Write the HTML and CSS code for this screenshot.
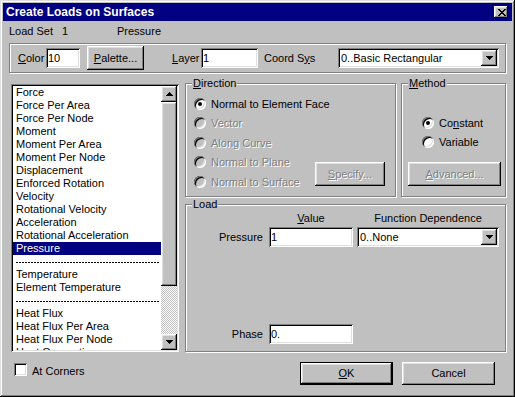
FILE: index.html
```html
<!DOCTYPE html>
<html>
<head>
<meta charset="utf-8">
<title>Create Loads on Surfaces</title>
<link rel="stylesheet" href="styles.css">
</head>
<body>
<div class="window">
  <div class="titlebar">
    <span class="title">Create Loads on Surfaces</span>
    <div class="close">
      <svg width="8" height="7" viewBox="0 0 8 7" shape-rendering="crispEdges"><path fill="#000" d="M0 0h2v1H0zM6 0h2v1H6zM1 1h2v1H1zM5 1h2v1H5zM2 2h4v1H2zM3 3h2v1H3zM2 4h4v1H2zM1 5h2v1H1zM5 5h2v1H5zM0 6h2v1H0zM6 6h2v1H6z"/></svg>
    </div>
  </div>

  <div class="info"><span class="ls">Load Set</span><span class="ls-num">1</span><span>Pressure</span></div>

  <div class="frame">
    <span class="lbl lbl-color"><u>C</u>olor</span>
    <div class="field w-color">10</div>
    <div class="btn btn-palette"><span><u>P</u>alette...</span></div>
    <span class="lbl lbl-layer"><u>L</u>ayer</span>
    <div class="field w-layer">1</div>
    <span class="lbl lbl-coord">Coord S<u>y</u>s</span>
    <div class="combo w-coord">
      <span class="combo-text">0..Basic Rectangular</span>
      <div class="drop"><svg width="7" height="4" viewBox="0 0 7 4" shape-rendering="crispEdges"><path fill="#000" d="M0 0h7v1H0zM1 1h5v1H1zM2 2h3v1H2zM3 3h1v1H3z"/></svg></div>
    </div>
  </div>

  <div class="main">
    <div class="listbox">
      <div class="items">
        <div class="item">Force</div>
        <div class="item">Force Per Area</div>
        <div class="item">Force Per Node</div>
        <div class="item">Moment</div>
        <div class="item">Moment Per Area</div>
        <div class="item">Moment Per Node</div>
        <div class="item">Displacement</div>
        <div class="item">Enforced Rotation</div>
        <div class="item">Velocity</div>
        <div class="item">Rotational Velocity</div>
        <div class="item">Acceleration</div>
        <div class="item">Rotational Acceleration</div>
        <div class="item selected">Pressure</div>
        <div class="sep"></div>
        <div class="item">Temperature</div>
        <div class="item">Element Temperature</div>
        <div class="sep"></div>
        <div class="item">Heat Flux</div>
        <div class="item">Heat Flux Per Area</div>
        <div class="item">Heat Flux Per Node</div>
        <div class="item">Heat Generation</div>
      </div>
      <div class="vscroll">
        <div class="sb-btn"><svg width="7" height="4" viewBox="0 0 7 4" shape-rendering="crispEdges"><path fill="#000" d="M3 0h1v1H3zM2 1h3v1H2zM1 2h5v1H1zM0 3h7v1H0z"/></svg></div>
        <div class="thumb"></div>
        <div class="track"></div>
        <div class="sb-btn"><svg width="7" height="4" viewBox="0 0 7 4" shape-rendering="crispEdges"><path fill="#000" d="M0 0h7v1H0zM1 1h5v1H1zM2 2h3v1H2zM3 3h1v1H3z"/></svg></div>
      </div>
    </div>

    <div class="right">
      <div class="top">
        <div class="group dir">
          <span class="legend"><u>D</u>irection</span>
          <div class="radios">
            <div class="rrow"><span class="radio checked"></span><span>Normal to Element Face</span></div>
            <div class="rrow disabled"><span class="radio"></span><span>Vector</span></div>
            <div class="rrow disabled"><span class="radio"></span><span>Along Curve</span></div>
            <div class="rrow disabled"><span class="radio"></span><span>Normal to Plane</span></div>
            <div class="rrow disabled"><span class="radio"></span><span>Normal to Surface</span></div>
          </div>
          <div class="btn btn-specify disabled"><span><u>S</u>pecify...</span></div>
        </div>
        <div class="group method">
          <span class="legend"><u>M</u>ethod</span>
          <div class="radios">
            <div class="rrow"><span class="radio checked"></span><span>Co<u>n</u>stant</span></div>
            <div class="rrow"><span class="radio"></span><span>Variable</span></div>
          </div>
          <div class="btn btn-adv disabled"><span><u>A</u>dvanced...</span></div>
        </div>
      </div>

      <div class="group load">
        <span class="legend">Load</span>
        <span class="hdr hdr-value"><u>V</u>alue</span>
        <span class="hdr hdr-func">Function Dependence</span>
        <span class="rlabel row-p">Pressure</span>
        <div class="field val row-p">1</div>
        <div class="combo w-func row-p">
          <span class="combo-text">0..None</span>
          <div class="drop"><svg width="7" height="4" viewBox="0 0 7 4" shape-rendering="crispEdges"><path fill="#000" d="M0 0h7v1H0zM1 1h5v1H1zM2 2h3v1H2zM3 3h1v1H3z"/></svg></div>
        </div>
        <span class="rlabel row-ph">Phase</span>
        <div class="field val row-ph">0.</div>
      </div>
    </div>
  </div>

  <div class="bottom">
    <div class="check-wrap">
      <span class="checkbox"></span>
      <span class="check-label">At Corners</span>
    </div>
    <div class="btn btn-ok"><span><u>O</u>K</span></div>
    <div class="btn btn-cancel"><span>Cancel</span></div>
  </div>
</div>
</body>
</html>
```

FILE: styles.css
```css
* { box-sizing: border-box; }
html, body { margin: 0; padding: 0; }
body {
  width: 515px;
  height: 397px;
  overflow: hidden;
  background: #c0c0c0;
  font-family: "Liberation Sans", Arial, sans-serif;
  font-size: 11px;
  color: #000;
}
u { text-decoration: underline; text-underline-offset: 1px; }

.window {
  width: 515px;
  height: 397px;
  padding: 3px;
  background: #c0c0c0;
  box-shadow: inset -1px -1px #000, inset 1px 1px #dfdfdf, inset -2px -2px #808080, inset 2px 2px #fff;
  display: flex;
  flex-direction: column;
}

/* raised / sunken helpers */
.btn, .close, .drop, .sb-btn, .thumb {
  background: #c0c0c0;
  box-shadow: inset -1px -1px #000, inset 1px 1px #fff, inset -2px -2px #808080, inset 2px 2px #dfdfdf;
}
.field, .combo, .listbox, .checkbox {
  background: #fff;
  box-shadow: inset 1px 1px #808080, inset -1px -1px #fff, inset 2px 2px #000, inset -2px -2px #dfdfdf;
}

.titlebar {
  height: 18px;
  background: #000080;
  display: flex;
  align-items: center;
  padding-left: 3px;
}
.title {
  flex: 1;
  color: #fff;
  font-weight: bold;
  font-size: 12px;
  line-height: 18px;
}
.close {
  width: 14px;
  height: 12px;
  margin-right: 4px;
  display: flex;
  align-items: center;
  justify-content: center;
}
.close svg { display: block; margin-left: 1px; }

.info {
  display: flex;
  height: 13px;
  line-height: 13px;
  margin: 4px 0 0 6px;
}
.ls { width: 53px; }
.ls-num { width: 55px; }

.frame {
  margin: 5px 0 0 6px;
  width: 497px;
  height: 30px;
  border: 1px solid #808080;
  box-shadow: inset 1px 1px #fff, 1px 1px #fff;
  display: flex;
  align-items: center;
}
.lbl { line-height: 13px; }
.lbl-color { margin-left: 8px; width: 28px; }
.w-color { width: 34px; }
.btn-palette { margin-left: 7px; width: 57px; height: 24px; }
.lbl-layer { margin-left: 28px; width: 29px; }
.w-layer { width: 57px; }
.lbl-coord { margin-left: 6px; width: 74px; }
.w-coord { width: 161px; }

.field {
  height: 20px;
  line-height: 16px;
  padding: 2px 2px;
  white-space: nowrap;
  overflow: hidden;
}
.combo {
  height: 20px;
  padding: 2px;
  display: flex;
}
.combo-text {
  flex: 1;
  line-height: 16px;
  padding-left: 1px;
  white-space: nowrap;
  overflow: hidden;
}
.drop {
  width: 16px;
  height: 16px;
  display: flex;
  align-items: center;
  justify-content: center;
}
.drop svg, .sb-btn svg { display: block; }

.btn {
  display: flex;
  align-items: center;
  justify-content: center;
  line-height: 13px;
  flex: none;
}
.btn.disabled { color: #808080; text-shadow: 1px 1px #fff; }

/* main area */
.main {
  display: grid;
  grid-template-columns: 168px 321px;
  column-gap: 6px;
  margin: 10px 0 0 8px;
  height: 269px;
}
.listbox {
  margin-top: 1px;
  height: 268px;
  padding: 2px;
  display: flex;
  overflow: hidden;
}
.items {
  flex: 1;
  overflow: hidden;
}
.item {
  height: 13px;
  line-height: 13px;
  padding-left: 3px;
  white-space: nowrap;
}
.item.selected { background: #000080; color: #fff; }
.sep { height: 13px; position: relative; }
.sep::before {
  content: "";
  position: absolute;
  left: 3px;
  right: 1px;
  top: 7px;
  height: 1px;
  background: repeating-linear-gradient(90deg, #000 0 2px, transparent 2px 3px);
}
.vscroll {
  width: 16px;
  display: flex;
  flex-direction: column;
}
.sb-btn {
  height: 16px;
  display: flex;
  align-items: center;
  justify-content: center;
}
.thumb { height: 184px; }
.track {
  flex: 1;
  background: repeating-conic-gradient(#c0c0c0 0 25%, #fff 0 50%) 0 0 / 2px 2px;
}

.right {
  display: grid;
  grid-template-rows: 114px 148px;
  row-gap: 7px;
}
.top {
  display: grid;
  grid-template-columns: 211px 105px;
  column-gap: 5px;
}
.group {
  position: relative;
  border: 1px solid #808080;
  box-shadow: inset 1px 1px #fff, 1px 1px #fff;
}
.legend {
  position: absolute;
  top: -7px;
  left: 6px;
  padding: 0 1px;
  background: #c0c0c0;
  line-height: 13px;
}

.dir {
  display: flex;
  padding: 10px 0 0 8px;
}
.radios { display: flex; flex-direction: column; min-width: 0; flex: 1; }
.rrow {
  height: 19.5px;
  display: flex;
  align-items: center;
  white-space: nowrap;
}
.rrow.disabled { color: #808080; text-shadow: 1px 1px #fff; }
.radio {
  flex: none;
  position: relative;
  width: 12px;
  height: 12px;
  margin-right: 5px;
  border-radius: 50%;
  background: #fff;
  box-shadow: inset 1px 1px #808080, inset -1px -1px #fff, inset 2px 2px #000, inset -2px -2px #dfdfdf;
}
.rrow.disabled .radio { background: #c0c0c0; }
.radio.checked::after {
  content: "";
  position: absolute;
  left: 4px;
  top: 4px;
  width: 4px;
  height: 4px;
  border-radius: 50%;
  background: #000;
}
.btn-specify {
  margin: 0 10px 10px 0;
  align-self: flex-end;
  width: 70px;
  height: 24px;
}

.method {
  display: flex;
  flex-direction: column;
  padding: 29px 0 0 20px;
}
.method .radios { flex: none; }
.btn-adv {
  margin: auto 0 10px -14px;
  width: 93px;
  height: 24px;
}

.load {
  display: grid;
  grid-template-columns: 83px 84px 146px;
  grid-template-rows: 13px 20px 1fr 20px;
  row-gap: 2px;
  padding: 7px 0 7px 0;
}
.hdr { line-height: 13px; text-align: center; white-space: nowrap; }
.hdr-value { grid-column: 2; grid-row: 1; }
.hdr-func { grid-column: 3; grid-row: 1; padding-left: 4px; }
.rlabel {
  grid-column: 1;
  text-align: right;
  padding-right: 6px;
  line-height: 20px;
}
.val { grid-column: 2; }
.row-p { grid-row: 2; }
.row-ph { grid-row: 4; }
.w-func { grid-column: 3; margin-left: 4px; width: 142px; }

/* bottom */
.bottom {
  display: flex;
  margin-top: 10px;
  height: 23px;
}
.check-wrap {
  margin-left: 11px;
  display: flex;
  align-items: flex-start;
}
.checkbox {
  width: 13px;
  height: 13px;
  margin-top: 1px;
}
.check-label {
  margin-left: 5px;
  padding-top: 2px;
  line-height: 15px;
}
.btn-ok {
  margin-left: auto;
  width: 93px;
  height: 23px;
  border: 1px solid #000;
  box-shadow: inset -1px -1px #000, inset 1px 1px #fff, inset -2px -2px #808080, inset 2px 2px #dfdfdf;
}
.btn-cancel {
  margin-left: 9px;
  margin-right: 17px;
  width: 93px;
  height: 23px;
}
```
